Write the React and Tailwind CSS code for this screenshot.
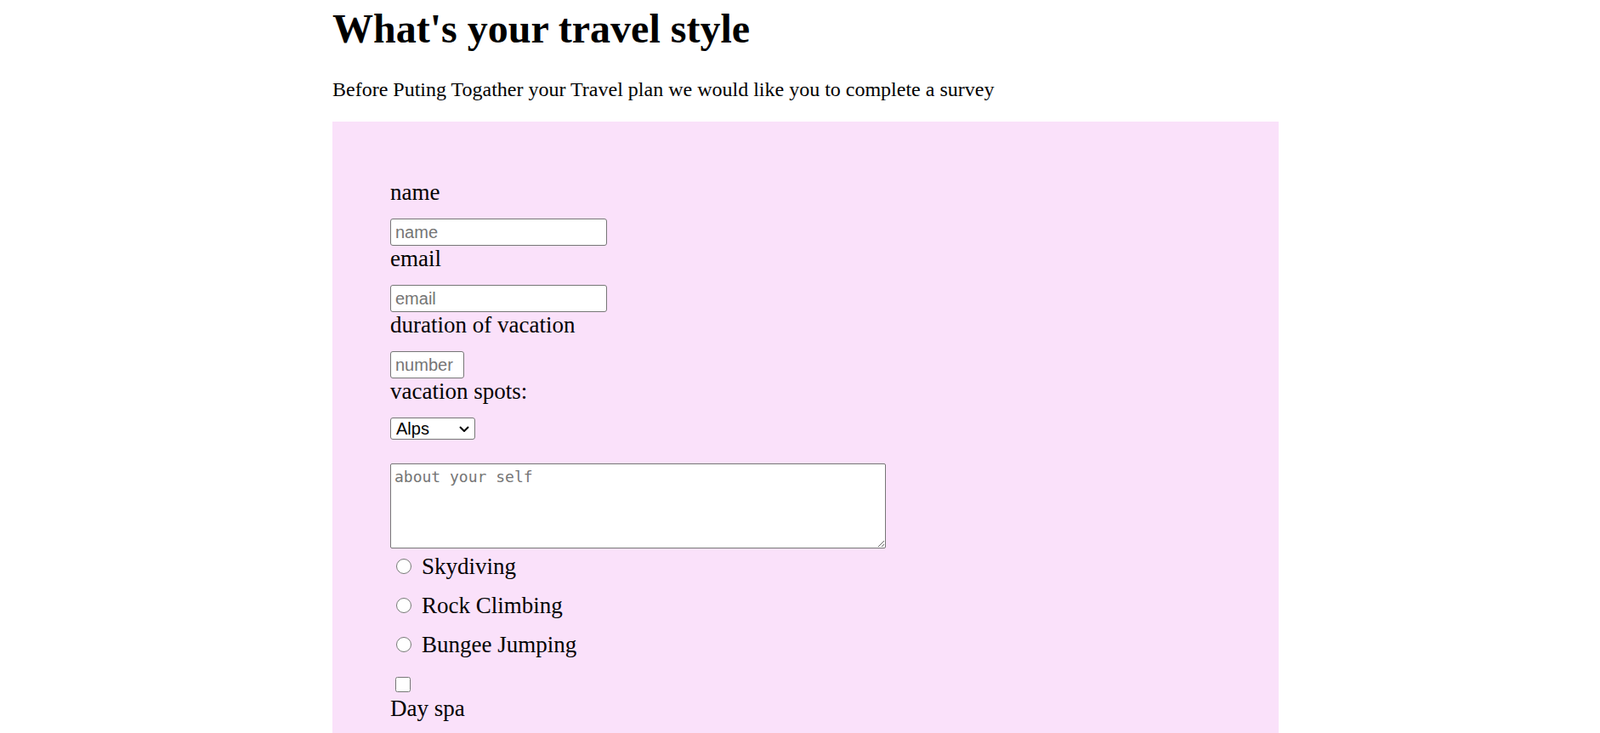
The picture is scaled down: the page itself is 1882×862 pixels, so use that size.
import React from 'react'

const inputCls =
  'block h-[32px] border border-[#767676] rounded-[3px] bg-white px-[5px] text-[20px] text-black placeholder:text-[#757575] outline-none'

const labelCls = 'block text-[27px] leading-[30px] mb-[16px]'

export default function App() {
  const activities = ['Skydiving', 'Rock Climbing', 'Bungee Jumping']

  return (
    <div className="min-h-screen bg-white text-black font-['Liberation_Serif',serif]">
      <div className="ml-[391px] w-[1113px] pt-[7px]">
        {/* Header */}
        <h1 className="text-[48px] leading-[53px] font-bold">What's your travel style</h1>
        <p className="mt-[32px] text-[24px] leading-[27px]">
          Before Puting Togather your Travel plan we would like you to complete a survey
        </p>

        {/* Survey */}
        <form className="mt-[24px] bg-[#fae1fa] pt-[68px] pl-[68px] pb-[48px]">
          <label htmlFor="name" className={labelCls}>name</label>
          <input
            id="name"
            type="text"
            placeholder="name"
            className={`${inputCls} w-[255px] font-['Liberation_Sans',Arial,sans-serif]`}
          />

          <label htmlFor="email" className={labelCls}>email</label>
          <input
            id="email"
            type="email"
            placeholder="email"
            className={`${inputCls} w-[255px] font-['Liberation_Sans',Arial,sans-serif]`}
          />

          <label htmlFor="number" className={labelCls}>duration of vacation</label>
          <input
            id="number"
            type="number"
            placeholder="number"
            className={`${inputCls} w-[87px] font-['Liberation_Sans',Arial,sans-serif] [appearance:textfield] [&::-webkit-inner-spin-button]:appearance-none [&::-webkit-outer-spin-button]:appearance-none`}
          />

          <label htmlFor="spots" className={labelCls}>vacation spots:</label>
          <div className="relative w-[100px] h-[26px]">
            <select
              id="spots"
              defaultValue="alps"
              className="block w-[100px] h-[26px] appearance-none border border-[#767676] rounded-[3px] bg-white pl-[6px] text-[20px] leading-[24px] font-['Liberation_Sans',Arial,sans-serif] outline-none"
            >
              <option value="alps">Alps</option>
              <option value="maldives">Maldives</option>
              <option value="bali">Bali</option>
            </select>
            <svg
              className="absolute right-[7px] top-[10px] pointer-events-none"
              width="12"
              height="7"
              viewBox="0 0 12 7"
              fill="none"
            >
              <path d="M1 1l5 5 5-5" stroke="#000" strokeWidth="2" />
            </svg>
          </div>

          <textarea
            placeholder="about your self"
            className="block mt-[28px] w-[583px] h-[100px] border border-[#767676] rounded-[2px] bg-white px-[4px] pt-[4px] text-[18px] leading-[22px] font-['DejaVu_Sans_Mono',monospace] placeholder:text-[#757575] resize outline-none"
          />

          <div className="mt-[6px]">
            {activities.map((a) => (
              <label key={a} className="flex items-center h-[30px] mb-[16px] text-[27px] leading-[30px]">
                <input type="radio" name="activity" className="w-[18px] h-[18px] ml-[7px] mr-[12px]" />
                {a}
              </label>
            ))}
          </div>

          <input type="checkbox" id="spa" className="block w-[18px] h-[18px] ml-[6px] mt-[23px]" />
          <label htmlFor="spa" className="block mt-[4px] text-[27px] leading-[30px]">Day spa</label>
        </form>
      </div>
    </div>
  )
}
